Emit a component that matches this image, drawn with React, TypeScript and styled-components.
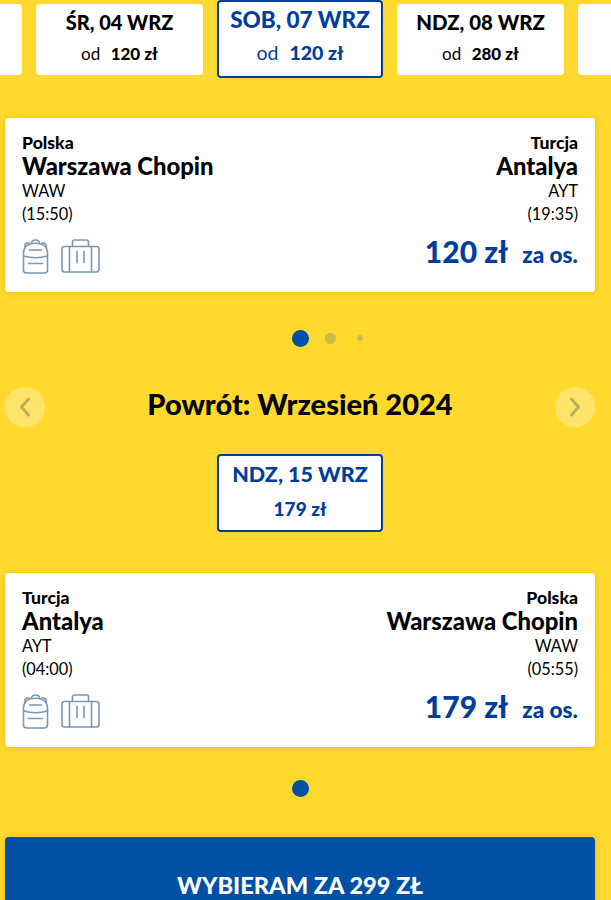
import React from "react";
import styled, { createGlobalStyle } from "styled-components";

const Global = createGlobalStyle`
  html, body { margin: 0; padding: 0; background: #ffd92d; }
  body { font-family: "Lato", "Liberation Sans", sans-serif; color: #000; }
`;

const Page = styled.div`
  width: 611px;
  height: 900px;
  overflow: hidden;
  background: #ffd92d;
  display: flex;
  flex-direction: column;
`;

const DateStrip = styled.div`
  display: flex;
  justify-content: center;
  align-items: flex-start;
  gap: 14px;
  flex: none;
  height: 78px;
  width: 611px;
  margin-left: -5.5px;
`;

const DateCard = styled.div<{ $selected?: boolean }>`
  box-sizing: border-box;
  flex: 0 0 ${(p) => (p.$selected ? 166 : 167)}px;
  height: ${(p) => (p.$selected ? 78 : 71)}px;
  margin-top: ${(p) => (p.$selected ? 0 : 4)}px;
  background: #fff;
  border-radius: 4px;
  border: ${(p) => (p.$selected ? "2px solid #003e9c" : "none")};
  color: ${(p) => (p.$selected ? "#003e9c" : "#000")};
  display: flex;
  flex-direction: column;
  align-items: center;
`;

const DateTitle = styled.div<{ $size: number }>`
  font-size: ${(p) => p.$size}px;
  font-weight: 900;
  line-height: 26px;
  margin-top: 5px;
  white-space: nowrap;
`;

const DatePrice = styled.div<{ $big?: boolean }>`
  font-size: ${(p) => (p.$big ? 19.5 : 17)}px;
  line-height: 24px;
  margin-top: ${(p) => (p.$big ? 8 : 7)}px;
  white-space: nowrap;
  b { font-weight: 900; margin-left: 6px; }
`;

const Single = styled.div`
  font-size: 19px;
  font-weight: 900;
  line-height: 24px;
  margin-top: 10px;
`;

const FlightCard = styled.div<{ $top: number }>`
  box-sizing: border-box;
  flex: none;
  margin: ${(p) => p.$top}px 16px 0 5px;
  height: 174px;
  background: #fff;
  border-radius: 4px;
  box-shadow: 0 1px 6px rgba(190, 150, 0, 0.35);
  padding: 15px 17px 0;
  display: grid;
  grid-template-columns: 1fr 1fr;
`;

const Side = styled.div<{ $right?: boolean }>`
  display: flex;
  flex-direction: column;
  align-items: ${(p) => (p.$right ? "flex-end" : "flex-start")};
  text-align: ${(p) => (p.$right ? "right" : "left")};
`;

const Country = styled.div`
  font-size: 17.6px;
  font-weight: 900;
  line-height: 20px;
`;

const City = styled.div`
  font-size: 23.8px;
  font-weight: 900;
  line-height: 27px;
  white-space: nowrap;
`;

const Info = styled.div`
  font-size: 16.3px;
  line-height: 22.5px;
`;

const Bags = styled.div`
  display: flex;
  gap: 12px;
  margin-top: 14px;
`;

const Price = styled.div`
  display: flex;
  align-items: baseline;
  gap: 14px;
  margin-top: 6px;
  color: #003e9c;
  font-weight: 900;
`;

const Amount = styled.span`
  font-size: 30px;
  line-height: 40px;
`;

const PerPerson = styled.span`
  font-size: 22.6px;
`;

const Dots = styled.div<{ $top: number }>`
  display: flex;
  align-items: center;
  flex: none;
  margin-top: ${(p) => p.$top}px;
  padding-left: 285px;
  height: 18px;
`;

const DotSlot = styled.div`
  width: 30px;
  display: flex;
  justify-content: center;
`;

const Dot = styled.span<{ $size: number; $on?: boolean }>`
  width: ${(p) => p.$size}px;
  height: ${(p) => p.$size}px;
  border-radius: 50%;
  background: ${(p) => (p.$on ? "#0050a6" : "#c9bd4c")};
`;

const MonthRow = styled.div`
  display: flex;
  flex: none;
  align-items: center;
  justify-content: space-between;
  margin: 40px 16px 0 5px;
  height: 40px;
`;

const Heading = styled.h2`
  margin: 0 0 6px;
  font-size: 29px;
  font-weight: 900;
  line-height: 34px;
`;

const Arrow = styled.div`
  width: 40px;
  height: 40px;
  border-radius: 50%;
  background: rgba(255, 255, 255, 0.3);
  display: flex;
  align-items: center;
  justify-content: center;
`;

const ReturnDate = styled.div`
  display: flex;
  flex: none;
  justify-content: center;
  margin-top: 27px;
  width: 600px;
`;

const CTA = styled.div`
  box-sizing: border-box;
  flex: none;
  margin: 40px 16px 0 5px;
  height: 90px;
  background: #0050a6;
  border-radius: 4px 4px 0 0;
  box-shadow: 0 0 6px rgba(190, 150, 0, 0.4);
  color: #fff;
  font-size: 23.6px;
  font-weight: 900;
  text-align: center;
  padding-top: 33px;
  line-height: 30px;
`;

const Backpack = () => (
  <svg width="27" height="35" viewBox="0 0 27 35" fill="none" stroke="#7d96b0" strokeWidth="1.6" strokeLinecap="round" strokeLinejoin="round">
    <path d="M9.5 4.5 C9.5 2 11 1 13.5 1 C16 1 17.5 2 17.5 4.5" />
    <path d="M3 9 V6.5 C3 4.8 4 4 6 4 H7.5" />
    <path d="M24 9 V6.5 C24 4.8 23 4 21 4 H19.5" />
    <path d="M1.5 14 C1.5 8 6 4.2 13.5 4.2 C21 4.2 25.5 8 25.5 14 V31 C25.5 33 24.5 34 22.5 34 H4.5 C2.5 34 1.5 33 1.5 31 Z" />
    <path d="M7.5 11 H19.5" />
    <path d="M1.5 17 C8.5 19 18.5 19 25.5 17" />
    <path d="M6.5 24.5 H20.5" />
  </svg>
);

const Suitcase = () => (
  <svg width="39" height="34" viewBox="0 0 39 34" fill="none" stroke="#7d96b0" strokeWidth="1.6" strokeLinecap="round" strokeLinejoin="round">
    <path d="M11.5 7.5 V3 C11.5 1.8 12.3 1 13.5 1 H25.5 C26.7 1 27.5 1.8 27.5 3 V7.5" />
    <rect x="1" y="7.5" width="37" height="25.5" rx="2.5" />
    <path d="M8.5 7.5 V33" />
    <path d="M30.5 7.5 V33" />
    <path d="M16 12.5 V23.5" />
    <path d="M23 12.5 V23.5" />
  </svg>
);

const Chevron = ({ left }: { left?: boolean }) => (
  <svg width="12" height="20" viewBox="0 0 12 20" fill="none" stroke="#b9b353" strokeWidth="3" strokeLinecap="round" strokeLinejoin="round">
    <path d={left ? "M9.5 2 L2.5 10 L9.5 18" : "M2.5 2 L9.5 10 L2.5 18"} />
  </svg>
);

type FlightData = {
  fromCountry: string; fromCity: string; fromCode: string; fromTime: string;
  toCountry: string; toCity: string; toCode: string; toTime: string; price: string;
};

const Flight = ({ f, top }: { f: FlightData; top: number }) => (
  <FlightCard $top={top}>
    <Side>
      <Country>{f.fromCountry}</Country>
      <City>{f.fromCity}</City>
      <Info>{f.fromCode}</Info>
      <Info>{f.fromTime}</Info>
      <Bags>
        <Backpack />
        <Suitcase />
      </Bags>
    </Side>
    <Side $right>
      <Country>{f.toCountry}</Country>
      <City>{f.toCity}</City>
      <Info>{f.toCode}</Info>
      <Info>{f.toTime}</Info>
      <Price>
        <Amount>{f.price}</Amount>
        <PerPerson>za os.</PerPerson>
      </Price>
    </Side>
  </FlightCard>
);

export default function App() {
  return (
    <Page>
      <Global />
      <DateStrip>
        <DateCard />
        <DateCard>
          <DateTitle $size={20}>ŚR, 04 WRZ</DateTitle>
          <DatePrice>od <b>120 zł</b></DatePrice>
        </DateCard>
        <DateCard $selected>
          <DateTitle $size={22.5}>SOB, 07 WRZ</DateTitle>
          <DatePrice $big>od <b>120 zł</b></DatePrice>
        </DateCard>
        <DateCard>
          <DateTitle $size={20.4}>NDZ, 08 WRZ</DateTitle>
          <DatePrice>od <b>280 zł</b></DatePrice>
        </DateCard>
        <DateCard />
      </DateStrip>

      <Flight top={40} f={{
        fromCountry: "Polska", fromCity: "Warszawa Chopin", fromCode: "WAW", fromTime: "(15:50)",
        toCountry: "Turcja", toCity: "Antalya", toCode: "AYT", toTime: "(19:35)", price: "120 zł",
      }} />

      <Dots $top={37}>
        <DotSlot><Dot $size={17} $on /></DotSlot>
        <DotSlot><Dot $size={11} /></DotSlot>
        <DotSlot><Dot $size={6} /></DotSlot>
      </Dots>

      <MonthRow>
        <Arrow><Chevron left /></Arrow>
        <Heading>Powrót: Wrzesień 2024</Heading>
        <Arrow><Chevron /></Arrow>
      </MonthRow>

      <ReturnDate>
        <DateCard $selected>
          <DateTitle $size={21.5}>NDZ, 15 WRZ</DateTitle>
          <Single>179 zł</Single>
        </DateCard>
      </ReturnDate>

      <Flight top={41} f={{
        fromCountry: "Turcja", fromCity: "Antalya", fromCode: "AYT", fromTime: "(04:00)",
        toCountry: "Polska", toCity: "Warszawa Chopin", toCode: "WAW", toTime: "(05:55)", price: "179 zł",
      }} />

      <Dots $top={32}>
        <DotSlot><Dot $size={17} $on /></DotSlot>
      </Dots>

      <CTA>WYBIERAM ZA 299 ZŁ</CTA>
    </Page>
  );
}
